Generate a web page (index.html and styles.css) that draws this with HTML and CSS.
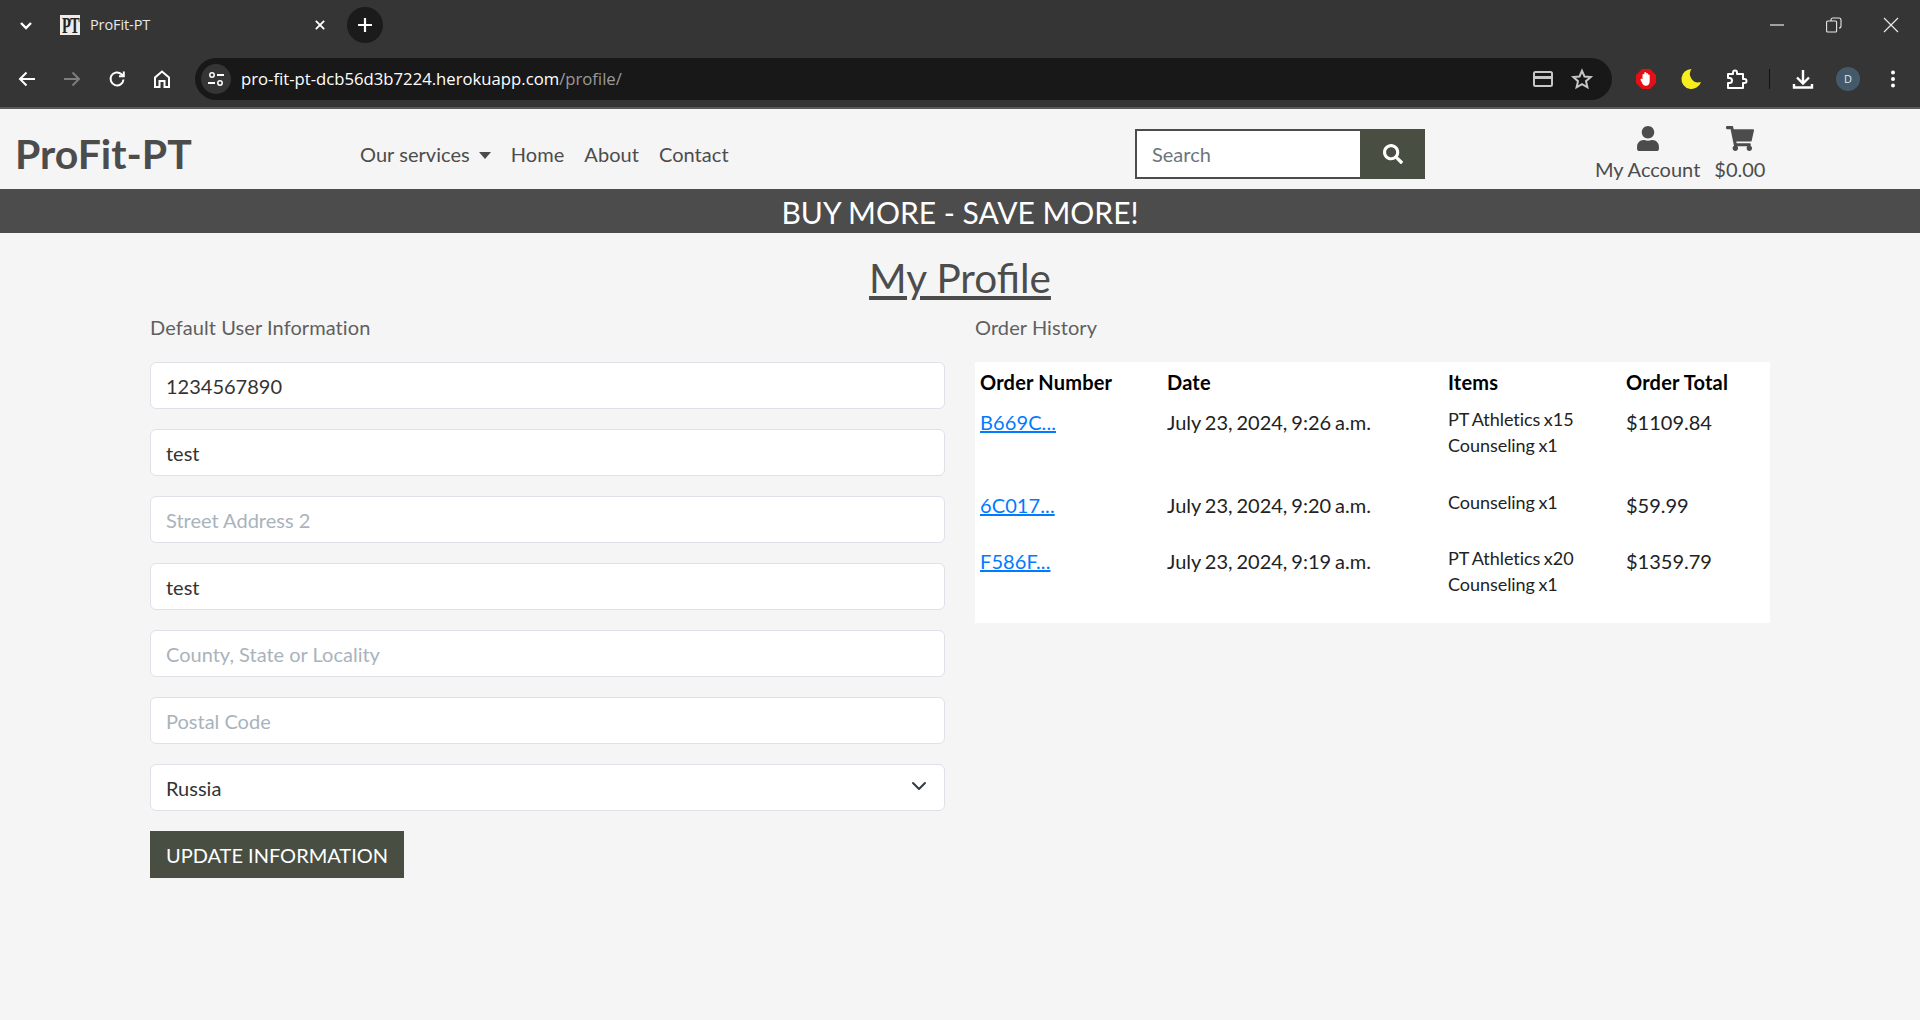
FILE: index.html
```html
<!DOCTYPE html>
<html lang="en">
<head>
<meta charset="utf-8">
<title>ProFit-PT</title>
<link rel="stylesheet" href="styles.css">
</head>
<body>
<header class="browser">
  <div class="tabstrip">
    <svg class="ic tab-list" viewBox="0 0 24 24"><path d="M7 10l5 5 5-5" fill="none" stroke="#fff" stroke-width="2.4"/></svg>
    <div class="favicon"><span class="favicon-text">PT</span></div>
    <span class="tab-title">ProFit-PT</span>
    <svg class="ic tab-close" viewBox="0 0 24 24"><path d="M7 7l10 10M17 7L7 17" stroke="#fff" stroke-width="2.2"/></svg>
    <div class="new-tab"><svg class="ic" viewBox="0 0 24 24"><path d="M12 5v14M5 12h14" stroke="#fff" stroke-width="2.2"/></svg></div>
    <div class="window-controls">
      <svg class="ic" viewBox="0 0 24 24"><path d="M5 12h14" stroke="#e8e8e8" stroke-width="1.2"/></svg>
      <svg class="ic" viewBox="0 0 24 24"><path d="M9 7.500V7a2 2 0 0 1 2-2h6a2 2 0 0 1 2 2v6a2 2 0 0 1-2 2M5.600 8h8a1 1 0 0 1 1 1v9a1 1 0 0 1-1 1h-8a1 1 0 0 1-1-1V9a1 1 0 0 1 1-1z" fill="none" stroke="#e8e8e8" stroke-width="1.100"/></svg>
      <svg class="ic" viewBox="0 0 24 24"><path d="M5 5l14 14M19 5L5 19" stroke="#e8e8e8" stroke-width="1.2"/></svg>
    </div>
  </div>
  <div class="toolbar">
    <svg class="ic nav-ic" viewBox="0 0 24 24"><path d="M20 12H5M11.500 5.500L5 12l6.500 6.500" fill="none" stroke="#fff" stroke-width="2"/></svg>
    <svg class="ic nav-ic" viewBox="0 0 24 24"><path d="M4 12h15M12.500 5.500L19 12l-6.500 6.500" fill="none" stroke="#7d7d7d" stroke-width="2"/></svg>
    <svg class="ic nav-ic" viewBox="0 0 24 24"><path d="M18.500 12.500a6.500 6.500 0 1 1-2-5.300L18.500 9M18.800 4.500V9.300H14" fill="none" stroke="#fff" stroke-width="2"/></svg>
    <svg class="ic nav-ic" viewBox="0 0 24 24"><path d="M5 20V10.500L12 4.500l7 6V20h-4.500v-6h-5v6z" fill="none" stroke="#fff" stroke-width="2"/></svg>
    <div class="omnibox">
      <div class="site-info"><svg class="ic-sm" viewBox="0 0 20 20"><circle cx="6" cy="6" r="2.200" fill="none" stroke="#fff" stroke-width="1.500"/><path d="M11 6h7M2 14h7" stroke="#fff" stroke-width="1.800"/><circle cx="14" cy="14" r="2.200" fill="none" stroke="#fff" stroke-width="1.500"/></svg></div>
      <span class="url">pro-fit-pt-dcb56d3b7224.herokuapp.com<span class="url-path">/profile/</span></span>
      <svg class="ic card-ic" viewBox="0 0 24 24"><rect x="3" y="5" width="18" height="14" rx="1.500" fill="none" stroke="#c7c7c7" stroke-width="2"/><path d="M3 10.500h18" stroke="#c7c7c7" stroke-width="3"/></svg>
      <svg class="ic star-ic" viewBox="0 0 24 24"><path d="M12 3.800l2.500 5.700 6.200.6-4.700 4.100 1.400 6.100-5.400-3.200-5.400 3.200 1.400-6.100-4.700-4.100 6.200-.6z" fill="none" stroke="#c7c7c7" stroke-width="2"/></svg>
    </div>
    <svg class="ext adblock" viewBox="0 0 24 24"><path d="M8 2h8l6 6v8l-6 6H8l-6-6V8z" fill="#e60f13"/><path d="M8.500 12V7.500a1 1 0 0 1 1.800 0V5.800a1 1 0 0 1 1.900 0v.7a1 1 0 0 1 1.800.3v1a1 1 0 0 1 1.700.5v6c0 3-1.800 4.500-3.700 4.500-2.300 0-3.200-1.200-4-3L6.500 13c-.4-1 1-1.800 1.600-1z" fill="#fff"/></svg>
    <svg class="ext moon" viewBox="0 0 24 24"><path d="M12.500 2A10 10 0 1 0 22 15A8.500 8.500 0 0 1 12.500 2z" fill="#f7ee20"/></svg>
    <svg class="ext puzzle" viewBox="0 0 24 24"><path d="M4 7h5V5.500a2 2 0 0 1 4 0V7h6v5h1.500a2 2 0 0 1 0 4H19v5H4v-5h1.500a2 2 0 0 0 0-5H4z" fill="none" stroke="#fff" stroke-width="2" stroke-linejoin="round"/></svg>
    <div class="sep"></div>
    <svg class="ext download" viewBox="0 0 24 24"><path d="M12 3v13M6 10.500l6 6 6-6" fill="none" stroke="#fff" stroke-width="2.400"/><path d="M3 17v3.500h18V17" fill="none" stroke="#fff" stroke-width="2.400"/></svg>
    <div class="avatar">D</div>
    <svg class="ext dots" viewBox="0 0 24 24"><circle cx="12" cy="5.500" r="2" fill="#fff"/><circle cx="12" cy="12" r="2" fill="#fff"/><circle cx="12" cy="18.500" r="2" fill="#fff"/></svg>
  </div>
</header>

<nav class="navbar">
  <a class="brand" href="#">ProFit-PT</a>
  <ul class="nav-links">
    <li><a href="#">Our services<span class="caret"></span></a></li>
    <li><a href="#">Home</a></li>
    <li><a href="#">About</a></li>
    <li><a href="#">Contact</a></li>
  </ul>
  <form class="search">
    <input class="search-input" type="text" placeholder="Search">
    <button class="search-btn" type="button"><svg viewBox="0 0 512 512"><path fill="#fff" d="M505 442.700L405.300 343c-4.500-4.500-10.600-7-17-7H372c27.600-35.300 44-79.700 44-128C416 93.100 322.900 0 208 0S0 93.100 0 208s93.100 208 208 208c48.300 0 92.700-16.400 128-44v16.300c0 6.400 2.500 12.500 7 17l99.700 99.700c9.400 9.400 24.600 9.400 33.900 0l28.300-28.300c9.400-9.400 9.400-24.600.1-34zM208 336c-70.700 0-128-57.200-128-128 0-70.700 57.200-128 128-128 70.700 0 128 57.200 128 128 0 70.700-57.200 128-128 128z"/></svg></button>
  </form>
  <div class="account">
    <a class="account-item" href="#">
      <svg class="user-ic" viewBox="0 0 448 512"><path d="M224 256c70.700 0 128-57.300 128-128S294.700 0 224 0 96 57.300 96 128s57.300 128 128 128zm89.600 32h-16.700c-22.200 10.200-46.900 16-72.900 16s-50.600-5.800-72.900-16h-16.700C60.200 288 0 348.200 0 422.400V464c0 26.500 21.500 48 48 48h352c26.500 0 48-21.500 48-48v-41.600c0-74.200-60.200-134.400-134.400-134.400z"/></svg>
      <span>My Account</span>
    </a>
    <a class="account-item" href="#">
      <svg class="cart-ic" viewBox="0 0 576 512"><path d="M528.120 301.319l47.273-208C578.806 78.301 567.391 67 551.990 67H159.208l-9.166-44.810C147.758 10.021 137.930 0 126.529 0H24C10.745 0 0 10.745 0 24v16c0 13.255 10.745 24 24 24h69.883l70.248 343.435C147.325 417.100 136 435.222 136 456c0 30.928 25.072 56 56 56s56-25.072 56-56c0-15.674-6.447-29.835-16.824-40h209.647C430.447 426.165 424 440.326 424 456c0 30.928 25.072 56 56 56s56-25.072 56-56c0-22.172-12.888-41.332-31.579-50.405l5.517-24.276c3.413-15.018-8.002-29.319-23.403-29.319H218.117l-6.545-32h293.145c11.206 0 20.920-7.754 23.403-18.681z"/></svg>
      <span>$0.00</span>
    </a>
  </div>
</nav>

<div class="banner">BUY MORE - SAVE MORE!</div>

<main class="page">
  <h1 class="page-title">My Profile</h1>
  <div class="columns">
    <section class="col">
      <p class="col-label">Default User Information</p>
      <form class="profile-form">
        <input class="field" type="text" value="1234567890">
        <input class="field" type="text" value="test">
        <input class="field" type="text" placeholder="Street Address 2">
        <input class="field" type="text" value="test">
        <input class="field" type="text" placeholder="County, State or Locality">
        <input class="field" type="text" placeholder="Postal Code">
        <div class="select-wrap">
          <select class="field select"><option>Russia</option></select>
          <svg class="select-arrow" viewBox="0 0 16 16"><path d="M2 5l6 6 6-6" fill="none" stroke="#343a40" stroke-width="2" stroke-linecap="round" stroke-linejoin="round"/></svg>
        </div>
        <button class="update-btn" type="button">UPDATE INFORMATION</button>
      </form>
    </section>
    <section class="col">
      <p class="col-label">Order History</p>
      <table class="orders">
        <colgroup><col class="c1"><col class="c2"><col class="c3"><col class="c4"></colgroup>
        <thead>
          <tr><th>Order Number</th><th>Date</th><th>Items</th><th>Order Total</th></tr>
        </thead>
        <tbody>
          <tr>
            <td><a href="#">B669C...</a></td>
            <td class="date">July 23, 2024, 9:26 a.m.</td>
            <td><div class="items items-first"><div>PT Athletics x15</div><div>Counseling x1</div></div></td>
            <td>$1109.84</td>
          </tr>
          <tr>
            <td><a href="#">6C017...</a></td>
            <td class="date">July 23, 2024, 9:20 a.m.</td>
            <td><div class="items"><div>Counseling x1</div></div></td>
            <td>$59.99</td>
          </tr>
          <tr>
            <td><a href="#">F586F...</a></td>
            <td class="date">July 23, 2024, 9:19 a.m.</td>
            <td><div class="items"><div>PT Athletics x20</div><div>Counseling x1</div></div></td>
            <td>$1359.79</td>
          </tr>
        </tbody>
      </table>
    </section>
  </div>
</main>
</body>
</html>
```

FILE: styles.css
```css
* { box-sizing: border-box; }
html, body { margin: 0; padding: 0; }
body {
  background: #f5f5f5;
  font-family: Lato, "Liberation Sans", sans-serif;
  font-size: 20px;
  color: #4c4c4c;
  height: 1020px;
  overflow: hidden;
}
a { color: inherit; text-decoration: none; }

/* Browser frame */
.browser { background: #353535; height: 109px; border-bottom: 2px solid #5a5a5a; color: #fff; }
.tabstrip { display: flex; align-items: center; height: 50px; padding-left: 14px; }
.toolbar { display: flex; align-items: center; height: 42px; margin-top: 8px; padding-left: 15px; }
.ic { width: 24px; height: 24px; flex: none; display: block; }
.tab-list { margin-right: 22px; }
.favicon {
  width: 20px; height: 20px; background: #ececec; color: #222;
  font: 700 18px/20px "Liberation Serif", serif; text-align: center;
}
.favicon-text { display: block; transform: scale(.8, 1.25); letter-spacing: -1px; }
.tab-title { margin-left: 10px; width: 220px; font: 14.5px/20px "Open Sans", sans-serif; color: #e8e8e8; letter-spacing: -.1px; }
.tab-close { width: 20px; height: 20px; }
.new-tab {
  width: 36px; height: 36px; border-radius: 50%; background: #1b1b1b; margin-left: 17px;
  display: flex; align-items: center; justify-content: center;
}
.window-controls { display: flex; margin-left: auto; margin-right: 17px; gap: 33px; }
.nav-ic { margin-right: 21px; }
.omnibox {
  width: 1417px; height: 42px; background: #181818; border-radius: 21px;
  display: flex; align-items: center; padding-left: 6px;
}
.site-info {
  width: 30px; height: 30px; border-radius: 50%; background: #353535;
  display: flex; align-items: center; justify-content: center;
}
.ic-sm { width: 20px; height: 20px; }
.url { margin-left: 10px; font: 16.7px/22px "Open Sans", sans-serif; color: #fff; white-space: nowrap; }
.url-path { color: #9a9a9a; }
.card-ic { margin-left: auto; }
.star-ic { margin-left: 15px; margin-right: 18px; }
.ext { width: 24px; height: 24px; flex: none; display: block; }
.adblock { margin-left: 22px; }
.moon { margin-left: 21px; }
.puzzle { margin-left: 21px; }
.sep { width: 1px; height: 20px; background: #111; margin-left: 21px; }
.download { margin-left: 21px; }
.avatar {
  width: 24px; height: 24px; border-radius: 50%; background: #44596a; color: #dfe7ee;
  font: 11px/24px "Open Sans", sans-serif; text-align: center; margin-left: 21px;
}
.dots { margin-left: 21px; }

/* Site navbar */
.navbar {
  height: 80px; display: grid; grid-template-columns: 344px 775px 460px auto;
  align-items: center; padding: 10px 0 0 16px;
}
.brand { font-size: 41px; font-weight: 700; line-height: 48px; margin-left: -1px; }
.nav-links { list-style: none; display: flex; gap: 20px; margin: 0; padding: 0; line-height: 30px; letter-spacing: .05px; }
.caret {
  display: inline-block; margin-left: 9px; vertical-align: 3px;
  border-top: 7px solid #4c4c4c; border-left: 6px solid transparent; border-right: 6px solid transparent;
}
.search { display: flex; width: 290px; height: 50px; }
.search-input {
  flex: 1; min-width: 0; height: 50px; border: 2px solid #4c4c4c; border-right: 0; background: #fff; border-radius: 0;
  padding: 0 15px; font: 20px Lato, sans-serif; color: #4c4c4c; outline: none;
}
.search-input::placeholder { color: #6c757d; opacity: 1; }
.search-btn {
  width: 65px; height: 50px; border: 0; background: #484e42; padding: 0;
  display: flex; align-items: center; justify-content: center;
}
.search-btn svg { width: 20px; height: 20px; }
.account { display: flex; gap: 14px; align-items: flex-end; margin-top: 1px; }
.account-item { display: flex; flex-direction: column; align-items: center; line-height: 30px; gap: 3px; }
.user-ic { width: 22px; height: 25px; fill: #4c4c4c; }
.cart-ic { width: 28px; height: 25px; fill: #4c4c4c; }

/* Banner */
.banner { height: 44px; background: #4c4c4c; color: #fff; text-align: center; font-size: 30px; line-height: 46px; }

/* Page */
.page { padding: 0 150px; }
.page-title { margin: 21px 0 0; font-size: 40.5px; font-weight: 400; line-height: 48px; text-align: center; text-decoration: underline; }
.columns { display: grid; grid-template-columns: 795px 795px; column-gap: 30px; }
.col-label { margin: 10px 0 20px; line-height: 30px; color: #5f5f5f; letter-spacing: .08px; }
.profile-form { display: flex; flex-direction: column; gap: 20px; align-items: flex-start; }
.field {
  display: block; width: 795px; height: 47px; background: #fff; border: 1px solid #dfe1e8; border-radius: 6px;
  padding: 0 15px; font: 20px Lato, sans-serif; color: #333; outline: none;
}
.field::placeholder { color: #a9b3bc; opacity: 1; }
.select { appearance: none; -webkit-appearance: none; }
.select-wrap { position: relative; }
.select-arrow { position: absolute; right: 18px; top: 14px; width: 16px; height: 16px; }
.update-btn {
  height: 47px; width: 254px; border: 0; background: #484e42; color: #fff; padding: 0;
  font: 20px Lato, sans-serif;
}

/* Orders */
.orders { width: 795px; table-layout: fixed; border-collapse: collapse; background: #fff; color: #222; }
.c1 { width: 187px; }
.c2 { width: 281px; }
.c3 { width: 178px; }
.c4 { width: 149px; }
.orders th { padding: 5px; font-weight: 700; text-align: left; line-height: 30px; color: #000; letter-spacing: .2px; }
.orders td { padding: 5px; vertical-align: top; line-height: 30px; }
.orders a { color: #007bff; text-decoration: underline; letter-spacing: .1px; }
.date { word-spacing: -1.2px; }
.items { font-size: 18px; line-height: 26px; margin-top: -1px; padding-bottom: 21px; word-spacing: -1px; letter-spacing: -.05px; }
.items-first { padding-bottom: 22px; }
```
